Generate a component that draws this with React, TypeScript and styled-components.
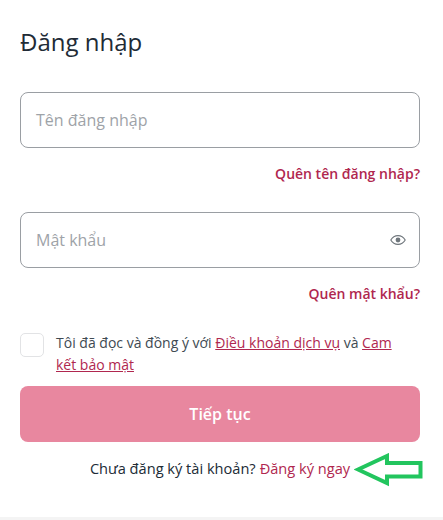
import React from 'react';
import styled, { createGlobalStyle } from 'styled-components';

const GlobalStyle = createGlobalStyle`
  html, body { margin: 0; padding: 0; background: #fff; }
  * { box-sizing: border-box; }
`;

const Page = styled.div`
  width: 443px;
  height: 520px;
  padding: 0 23px 0 20px;
  font-family: "Open Sans", "Noto Sans", sans-serif;
  color: #212b36;
  background: #fff;
  border-bottom: 3px solid #f4f4f4;
  overflow: hidden;
`;

const Title = styled.h1`
  margin: 0;
  padding-top: 25px;
  height: 92px;
  font-size: 24px;
  line-height: 33px;
  font-weight: 400;
`;

const Field = styled.div`
  display: flex;
  align-items: center;
  justify-content: space-between;
  height: 56px;
  padding: 0 13px 0 15px;
  border: 1px solid #9a9ea3;
  border-radius: 8px;
`;

const Placeholder = styled.span`
  font-size: 16px;
  color: #9ea3a8;
`;

const ForgotRow = styled.div`
  display: flex;
  justify-content: flex-end;
  height: 64px;
  padding-top: 16px;
`;

const LinkText = styled.a`
  font-size: inherit;
  line-height: 20px;
  color: #b0274f;
`;

const StrongLink = styled(LinkText)`
  font-size: 14px;
  font-weight: 600;
`;

const TermsRow = styled.div`
  display: flex;
  gap: 12px;
  height: 54px;
  padding-right: 24px;
`;

const Checkbox = styled.span`
  flex: none;
  width: 24px;
  height: 24px;
  margin-top: 1px;
  border: 1px solid #e2e3e5;
  border-radius: 5px;
`;

const TermsText = styled.p`
  margin: 0;
  font-size: 14px;
  line-height: 22px;
  color: #404a52;
`;

const TermsLink = styled(LinkText)`
  line-height: 22px;
  text-decoration: underline;
`;

const Submit = styled.button`
  display: block;
  width: 100%;
  height: 56px;
  padding-bottom: 2px;
  border: 0;
  border-radius: 8px;
  background: #e8879f;
  color: #fff;
  font-family: inherit;
  font-size: 16px;
  font-weight: 600;
`;

const SignupRow = styled.div`
  position: relative;
  display: flex;
  justify-content: center;
  gap: 4px;
  margin-top: 16px;
  font-size: 14.6px;
  line-height: 20px;
  color: #212b36;
`;

const Arrow = styled.svg`
  position: absolute;
  left: 334px;
  top: -5px;
`;

export default function App() {
  return (
    <Page>
      <GlobalStyle />
      <Title>Đăng nhập</Title>
      <Field>
        <Placeholder>Tên đăng nhập</Placeholder>
      </Field>
      <ForgotRow>
        <StrongLink>Quên tên đăng nhập?</StrongLink>
      </ForgotRow>
      <Field>
        <Placeholder>Mật khẩu</Placeholder>
        <svg width="16" height="16" viewBox="0 0 16 16" fill="none">
          <path d="M.8 8C2.4 5.2 5 3.6 8 3.6s5.6 1.6 7.2 4.4c-1.6 2.8-4.2 4.4-7.2 4.4S2.4 10.8.8 8Z" stroke="#6f767c" strokeWidth="1.1" />
          <circle cx="8" cy="8" r="2.4" fill="#6f767c" />
        </svg>
      </Field>
      <ForgotRow>
        <StrongLink>Quên mật khẩu?</StrongLink>
      </ForgotRow>
      <TermsRow>
        <Checkbox />
        <TermsText>
          Tôi đã đọc và đồng ý với <TermsLink>Điều khoản dịch vụ</TermsLink> và <TermsLink>Cam kết bảo mật</TermsLink>
        </TermsText>
      </TermsRow>
      <Submit>Tiếp tục</Submit>
      <SignupRow>
        <span>Chưa đăng ký tài khoản?</span>
        <LinkText>Đăng ký ngay</LinkText>
        <Arrow width="70" height="34" viewBox="0 0 70 34" fill="none">
          <path d="M4 16.5 33 3v7h33.5v13.5H33V30Z" stroke="#22c55e" strokeWidth="4" fill="#fff" strokeLinejoin="miter" />
        </Arrow>
      </SignupRow>
    </Page>
  );
}
